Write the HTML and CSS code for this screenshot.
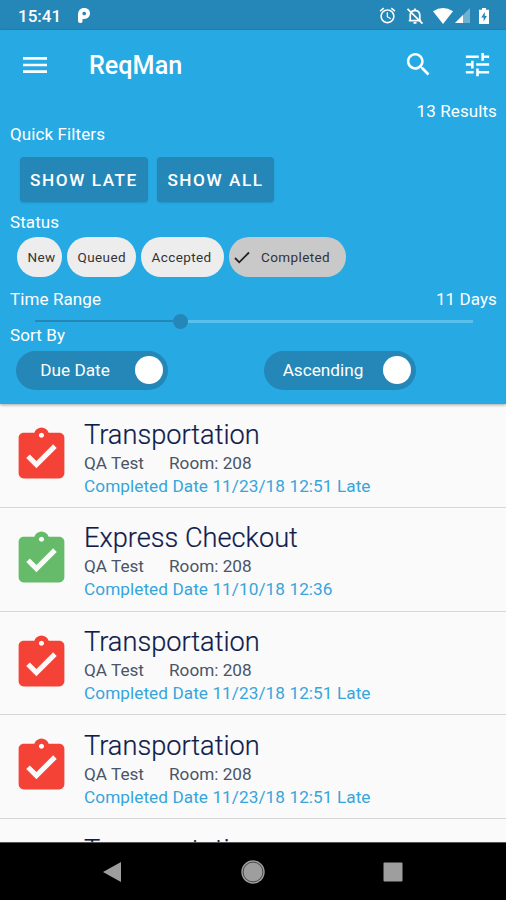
FILE: index.html
```html
<!DOCTYPE html>
<html lang="en">
<head>
<meta charset="utf-8">
<title>ReqMan</title>
<link rel="stylesheet" href="styles.css">
</head>
<body>
<svg class="defs" width="0" height="0" aria-hidden="true">
  <symbol id="task" viewBox="0 0 24 24"><path d="M19 3h-4.18C14.4 1.84 13.3 1 12 1c-1.3 0-2.4.84-2.82 2H5c-1.1 0-2 .9-2 2v14c0 1.1.9 2 2 2h14c1.1 0 2-.9 2-2V5c0-1.1-.9-2-2-2zm-7 0c.55 0 1 .45 1 1s-.45 1-1 1-1-.45-1-1 .45-1 1-1zm-2 14l-4-4 1.41-1.41L10 14.17l6.59-6.59L18 9l-8 8z"/></symbol>
</svg>
<div class="screen">
  <header class="statusbar">
    <span class="clock">15:41</span>
    <svg class="pico" viewBox="0 0 14 17"><path fill-rule="evenodd" d="M1 8C1 3.500 3.500 1 7.300 1C11 1 13 3.400 13 6.300C13 9.600 10.500 12 7.500 12H5.500V14.500Q5.500 16 3.200 16Q1 16 1 14ZM7.200 4.700a1.800 1.800 0 1 0 .01 0Z"/></svg>
    <div class="indicators">
      <svg class="alarm" viewBox="0 0 24 24"><path d="M22 5.720l-4.600-3.860-1.290 1.530 4.600 3.860L22 5.720zM7.880 3.390L6.600 1.860 2 5.710l1.290 1.530 4.590-3.850zM12.500 8H11v6l4.750 2.850.75-1.230-4-2.370V8zM12 4c-4.970 0-9 4.030-9 9s4.020 9 9 9c4.970 0 9-4.030 9-9s-4.030-9-9-9zm0 16c-3.870 0-7-3.130-7-7s3.130-7 7-7 7 3.130 7 7-3.130 7-7 7z"/></svg>
      <svg class="bell" viewBox="0 0 18 18" fill="none" stroke="#fff" stroke-width="1.700"><path d="M4.200 13.200V8.200C4.200 5.300 6 3.700 9 3.400C12 3.700 13.800 5.300 13.800 8.200V13.200M2.800 13.700H15.200M1.500 1.800L16.500 16.600"/><path d="M9 1.500V4M7.500 15.800H10.500"/></svg>
      <svg class="wifi" viewBox="0 0 20 16"><path d="M0 3.200Q10-3 20 3.200L10 16Z"/></svg>
      <svg class="signal" viewBox="0 0 15 15"><path opacity=".35" d="M0 15L15 0V15Z"/><path d="M0 15L8 7V15Z"/></svg>
      <svg class="battery" viewBox="0 0 10 16"><path fill-rule="evenodd" d="M3 0H7V1.700H10V16H0V1.700H3ZM5.800 4L2.200 9.400H4.600V13.500L7.900 8H5.800Z"/></svg>
    </div>
  </header>

  <section class="panel">
    <div class="toolbar">
      <svg class="menu" viewBox="0 0 24 24"><path d="M3 18h18v-2H3v2zm0-5h18v-2H3v2zm0-7v2h18V6H3z"/></svg>
      <h1 class="app-title">ReqMan</h1>
      <svg class="search" viewBox="0 0 24 24"><path d="M15.500 14h-.79l-.28-.27C15.410 12.590 16 11.110 16 9.500 16 5.910 13.090 3 9.500 3S3 5.910 3 9.500 5.910 16 9.500 16c1.610 0 3.090-.59 4.230-1.570l.27.28v.79l5 4.990L20.490 19l-4.990-5zm-6 0C7.010 14 5 11.990 5 9.500S7.010 5 9.500 5 14 7.010 14 9.500 11.990 14 9.500 14z"/></svg>
      <svg class="tune" viewBox="0 0 24 24"><path d="M3 17v2h6v-2H3zM3 5v2h10V5H3zm10 16v-2h8v-2h-8v-2h-2v6h2zM7 9v2H3v2h4v2h2V9H7zm14 4v-2H11v2h10zm-6-4h2V7h4V5h-4V3h-2v6z"/></svg>
    </div>
    <div class="results"><span>13 Results</span></div>
    <div class="label quick">Quick Filters</div>
    <div class="buttons">
      <button class="btn late">SHOW LATE</button>
      <button class="btn all">SHOW ALL</button>
    </div>
    <div class="label status">Status</div>
    <div class="chips">
      <span class="chip new">New</span>
      <span class="chip queued">Queued</span>
      <span class="chip accepted">Accepted</span>
      <span class="chip completed"><svg class="tick" viewBox="0 0 16 13"><path d="M1 7L5.200 11.300L15 1.500" fill="none" stroke="#222" stroke-width="1.800"/></svg>Completed</span>
    </div>
    <div class="label range"><span>Time Range</span><span>11 Days</span></div>
    <div class="slider"><i class="filled"></i><i class="thumb"></i><i class="rest"></i></div>
    <div class="label sort">Sort By</div>
    <div class="toggles">
      <div class="toggle"><span>Due Date</span><i class="knob"></i></div>
      <div class="toggle"><span>Ascending</span><i class="knob"></i></div>
    </div>
  </section>

  <main class="list">
    <article class="row"><svg class="task red"><use href="#task"/></svg><div class="info"><h2>Transportation</h2><p class="meta"><span>QA Test</span><span>Room: 208</span></p><p class="date">Completed Date 11/23/18 12:51 Late</p></div></article>
    <article class="row"><svg class="task green"><use href="#task"/></svg><div class="info"><h2>Express Checkout</h2><p class="meta"><span>QA Test</span><span>Room: 208</span></p><p class="date">Completed Date 11/10/18 12:36</p></div></article>
    <article class="row"><svg class="task red"><use href="#task"/></svg><div class="info"><h2>Transportation</h2><p class="meta"><span>QA Test</span><span>Room: 208</span></p><p class="date">Completed Date 11/23/18 12:51 Late</p></div></article>
    <article class="row"><svg class="task red"><use href="#task"/></svg><div class="info"><h2>Transportation</h2><p class="meta"><span>QA Test</span><span>Room: 208</span></p><p class="date">Completed Date 11/23/18 12:51 Late</p></div></article>
    <article class="row last"><div class="info"><h2>Transportation</h2></div></article>
  </main>

  <nav class="navbar">
    <svg viewBox="0 0 24 24"><path d="M2 12L20 2V22Z"/></svg>
    <svg viewBox="0 0 24 24"><circle cx="12" cy="12" r="11.700"/><circle cx="12" cy="12" r="9.900" fill="none" stroke="#333" stroke-width=".8"/></svg>
    <svg viewBox="0 0 24 24"><rect x="2.500" y="2.500" width="19" height="19" rx="1"/></svg>
  </nav>
</div>
</body>
</html>
```

FILE: styles.css
```css
* { box-sizing: border-box; }
body { margin: 0; font-family: Roboto, "Liberation Sans", sans-serif; }
h1, h2, p { margin: 0; font-weight: 400; }
svg { display: block; flex: none; }
.defs { position: absolute; }
.screen { width: 506px; height: 900px; display: flex; flex-direction: column; overflow: hidden; background: #fafafa; }

.statusbar { height: 30px; flex: none; background: #2587b7; color: #fff; display: flex; align-items: center; padding: 0 17px 0 18px; }
.statusbar svg { fill: #fff; }
.clock { font-size: 17px; font-weight: 500; line-height: 30px; width: 59px; padding-top: 1px; }
.statusbar .pico { width: 14px; height: 17px; margin-top: 1px; }
.indicators { margin-left: auto; display: flex; align-items: center; padding-top: 1px; }
.alarm { width: 19px; height: 19px; margin-right: 9px; }
.statusbar .bell { width: 18px; height: 18px; margin-right: 9px; fill: none; }
.wifi { width: 20px; height: 16px; margin-right: 2px; }
.signal { width: 15px; height: 15px; margin-right: 9px; }
.battery { width: 10px; height: 16px; }

.panel { height: 374px; flex: none; background: #27aae3; color: #fff; box-shadow: 0 1px 3px rgba(0,0,0,.35); position: relative; }
.toolbar { height: 69px; display: flex; align-items: center; padding: 0 13px 0 19px; }
.toolbar svg { fill: #fff; width: 32px; height: 32px; }
.app-title { font-size: 25.200px; font-weight: 500; line-height: 30px; margin-left: 38px; flex: 1; padding-top: 2px; }
.toolbar .search { width: 31px; height: 31px; margin-right: 28px; }
.toolbar .tune { width: 31px; height: 31px; }
.label, .results { font-size: 17px; line-height: 22px; padding: 0 9px 0 10px; height: 22px; letter-spacing: .1px; }
.results { padding-top: 1px; text-align: right; }
.quick { margin-top: 2px; }
.buttons { display: flex; gap: 9px; padding-left: 19.500px; margin-top: 12px; }
.btn { height: 45px; border: 0; border-radius: 4px; background: #2587b7; color: #fff; font: 500 17.200px/47px Roboto, sans-serif; letter-spacing: 1.550px; padding: 0; text-indent: 1px; box-shadow: 0 1px 2px rgba(0,0,0,.15); white-space: nowrap; }
.late { width: 128px; }
.all { width: 117px; }
.status { margin-top: 9px; }
.chips { display: flex; gap: 5px; padding-left: 17px; margin-top: 4px; }
.chip { height: 40px; border-radius: 20px; background: #ededed; color: #333; font-size: 13.500px; letter-spacing: .4px; line-height: 41px; padding-left: 10.500px; white-space: nowrap; }
.new { width: 45px; }
.queued { width: 69px; }
.accepted { width: 83px; }
.completed { width: 117px; background: #c9c9c9; display: flex; align-items: center; padding-left: 5px; }
.tick { width: 16px; height: 13px; margin-right: 11px; }
.range { display: flex; justify-content: space-between; margin-top: 11px; }
.slider { height: 15px; margin: 3.500px 33px 0 35px; display: flex; align-items: center; }
.slider i { display: block; }
.filled { width: 138px; height: 2px; background: #2587b7; }
.thumb { width: 15px; height: 15px; border-radius: 50%; background: #2587b7; }
.rest { flex: 1; height: 3px; background: #5bbfec; }
.sort { margin-top: -5px; }
.toggles { display: flex; gap: 96px; padding-left: 15.500px; margin-top: 5px; }
.toggle { width: 152px; height: 39px; border-radius: 20px; background: #2587b7; display: flex; align-items: center; padding-right: 5px; font-size: 17.200px; }
.toggle span { flex: 1; text-align: center; }
.knob { width: 28px; height: 28px; border-radius: 50%; background: #fff; }

.list { flex: 1; min-height: 0; overflow: hidden; }
.row { height: 103.800px; border-bottom: 1px solid #d6d6d6; display: flex; padding-left: 10.500px; }
.task { width: 61px; height: 61px; margin-top: 21px; }
.red { fill: #f44336; }
.green { fill: #66bb6a; }
.info { padding: 14.500px 0 0 12.500px; }
.last .info { padding-left: 73.500px; }
.info h2 { font-size: 27.200px; font-weight: 300; -webkit-text-stroke: .2px; line-height: 32px; color: #101c4c; white-space: nowrap; }
.meta { font-size: 17.200px; line-height: 24px; color: #4a5568; display: flex; gap: 25px; white-space: nowrap; }
.date { font-size: 17.200px; letter-spacing: .07px; line-height: 23px; color: #36a5dc; white-space: nowrap; }

.navbar { height: 58px; flex: none; background: #000; display: flex; align-items: center; justify-content: center; gap: 116px; border-top: 1px solid #555; }
.navbar svg { width: 24px; height: 24px; fill: #9e9e9e; }
```
